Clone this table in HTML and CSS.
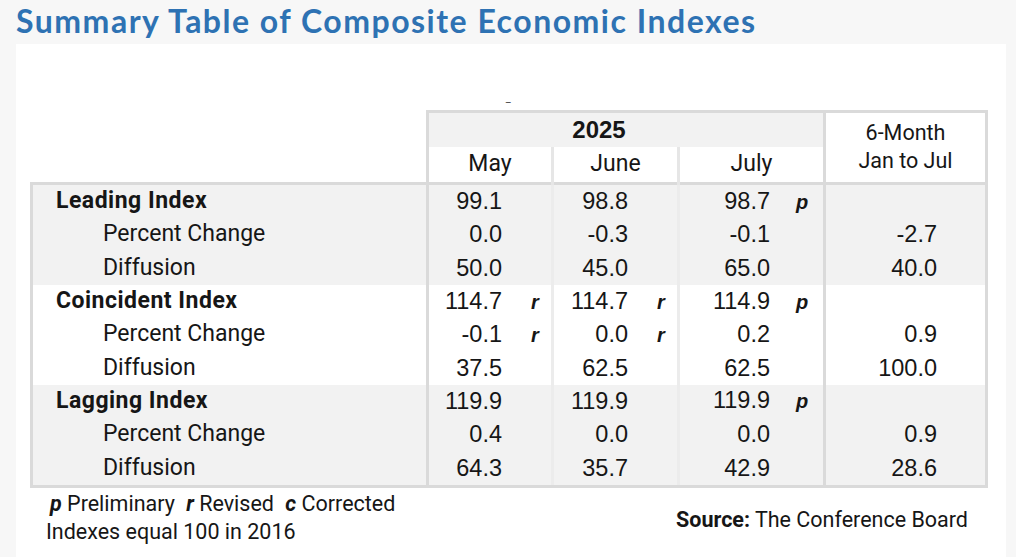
FILE: index.html
```html
<!DOCTYPE html>
<html lang="en">
<head>
<meta charset="utf-8">
<title>Summary Table of Composite Economic Indexes</title>
<link rel="stylesheet" href="styles.css">
</head>
<body>
<h1 class="title">Summary Table of Composite Economic Indexes</h1>
<div class="panel">
  <div class="dash">–</div>
  <table class="summary">
    <colgroup>
      <col class="c-label"><col class="c-may"><col class="c-june"><col class="c-july"><col class="c-six">
    </colgroup>
    <thead>
      <tr>
        <th class="blank" rowspan="2"></th>
        <th class="year" colspan="3">2025</th>
        <th class="six" rowspan="2">6-Month<br>Jan to Jul</th>
      </tr>
      <tr>
        <th class="month">May</th>
        <th class="month">June</th>
        <th class="month">July</th>
      </tr>
    </thead>
    <tbody class="grp shade">
      <tr><td class="lbl main">Leading Index</td><td class="v"><span class="n">99.1</span><span class="f"></span></td><td class="v"><span class="n">98.8</span><span class="f"></span></td><td class="v wide"><span class="n">98.7</span><span class="f">p</span></td><td class="s"></td></tr>
      <tr><td class="lbl sub">Percent Change</td><td class="v"><span class="n">0.0</span><span class="f"></span></td><td class="v"><span class="n">-0.3</span><span class="f"></span></td><td class="v wide"><span class="n">-0.1</span><span class="f"></span></td><td class="s">-2.7</td></tr>
      <tr><td class="lbl sub">Diffusion</td><td class="v"><span class="n">50.0</span><span class="f"></span></td><td class="v"><span class="n">45.0</span><span class="f"></span></td><td class="v wide"><span class="n">65.0</span><span class="f"></span></td><td class="s">40.0</td></tr>
    </tbody>
    <tbody class="grp">
      <tr><td class="lbl main">Coincident Index</td><td class="v"><span class="n">114.7</span><span class="f">r</span></td><td class="v"><span class="n">114.7</span><span class="f">r</span></td><td class="v wide"><span class="n">114.9</span><span class="f">p</span></td><td class="s"></td></tr>
      <tr><td class="lbl sub">Percent Change</td><td class="v"><span class="n">-0.1</span><span class="f">r</span></td><td class="v"><span class="n">0.0</span><span class="f">r</span></td><td class="v wide"><span class="n">0.2</span><span class="f"></span></td><td class="s">0.9</td></tr>
      <tr><td class="lbl sub">Diffusion</td><td class="v"><span class="n">37.5</span><span class="f"></span></td><td class="v"><span class="n">62.5</span><span class="f"></span></td><td class="v wide"><span class="n">62.5</span><span class="f"></span></td><td class="s">100.0</td></tr>
    </tbody>
    <tbody class="grp shade last">
      <tr><td class="lbl main">Lagging Index</td><td class="v"><span class="n">119.9</span><span class="f"></span></td><td class="v"><span class="n">119.9</span><span class="f"></span></td><td class="v wide"><span class="n">119.9</span><span class="f">p</span></td><td class="s"></td></tr>
      <tr><td class="lbl sub">Percent Change</td><td class="v"><span class="n">0.4</span><span class="f"></span></td><td class="v"><span class="n">0.0</span><span class="f"></span></td><td class="v wide"><span class="n">0.0</span><span class="f"></span></td><td class="s">0.9</td></tr>
      <tr><td class="lbl sub">Diffusion</td><td class="v"><span class="n">64.3</span><span class="f"></span></td><td class="v"><span class="n">35.7</span><span class="f"></span></td><td class="v wide"><span class="n">42.9</span><span class="f"></span></td><td class="s">28.6</td></tr>
    </tbody>
  </table>
  <div class="notes">
    <div class="legend">
      <div class="legend-line"><b class="k">p</b> Preliminary <b class="k">r</b> Revised <b class="k">c</b> Corrected</div>
      <div class="legend-line base">Indexes equal 100 in 2016</div>
    </div>
    <div class="source"><b>Source:</b> The Conference Board</div>
  </div>
</div>
</body>
</html>
```
FILE: styles.css
```css
html, body {
  margin: 0;
  padding: 0;
  background: #f7f7f7;
}
body {
  width: 1016px;
  height: 557px;
  overflow: hidden;
  font-family: Roboto, "Liberation Sans", Arial, sans-serif;
  color: #161616;
}
.title {
  margin: 0;
  padding: 2px 0 0 16px;
  height: 42px;
  box-sizing: border-box;
  font-family: Lato, "Open Sans", sans-serif;
  font-weight: 700;
  font-size: 32px;
  line-height: 38px;
  color: #2e72b3;
  letter-spacing: 1.5px;
  white-space: nowrap;
}
.panel {
  margin: 2px 10px 0 16px;
  background: #fff;
  height: 520px;
  padding-top: 52px;
  box-sizing: border-box;
}
.dash {
  height: 14px;
  margin-left: 489px;
  font-size: 10px;
  line-height: 14px;
  color: #444;
}
.summary {
  margin-left: 14px;
  border-collapse: collapse;
  table-layout: fixed;
  width: 955px;
  font-size: 23px;
}
.c-label { width: 396px; }
.c-may { width: 125px; }
.c-june { width: 126px; }
.c-july { width: 146px; }
.c-six { width: 162px; }

th { font-weight: 400; padding: 0; }
th.blank { border: none; background: #fff; }
th.year {
  background: #f2f2f2;
  font-family: "Liberation Sans", Arial, sans-serif;
  font-weight: 700;
  font-size: 24px;
  height: 32px;
  border-top: 3px solid #dadada;
  border-left: 3px solid #dadada;
  line-height: 34px;
  text-align: center;
  padding-right: 54px;
}
th.six {
  background: #fff;
  border-top: 3px solid #dadada;
  border-left: 3px solid #dadada;
  border-right: 3px solid #dadada;
  font-size: 21.5px;
  line-height: 28px;
  vertical-align: top;
  padding-top: 6px;
}
th.month {
  background: #fff;
  height: 35px;
  border-left: 3px solid #e6e6e6;
  line-height: 33px;
  vertical-align: top;
}
th.month:first-child { border-left: 3px solid #dadada; }

.grp td { height: 32.3px; padding: 0 0 1px; line-height: 26px; }
.grp.shade td { background: #f2f2f2; }
.grp:first-of-type tr:first-child td { border-top: 3px solid #dadada; }
.grp.last tr:last-child td { border-bottom: 3px solid #dadada; }

td.lbl { border-left: 3px solid #dadada; border-right: 3px solid #dadada; }
td.main { font-weight: 700; padding-left: 23px; letter-spacing: 0.5px; }
td.sub { padding-left: 70px; }

td.v { border-left: 3px solid #ececec; }
td.lbl + td.v { border-left: 3px solid #dadada; }
td.v > .n,
td.v > .f { display: inline-block; }
td.v {
  font-family: "Liberation Sans", Arial, sans-serif;
  font-size: 23.5px;
  text-align: right;
  white-space: nowrap;
}
td.v .n { text-align: right; }
td.v .f {
  width: 49px;
  text-align: left;
  padding-left: 29px;
  box-sizing: border-box;
  font-weight: 700;
  font-style: italic;
  font-size: 20px;
}
td.v.wide .f {
  width: 53px;
  padding-left: 26px;
}
td.s {
  font-family: "Liberation Sans", Arial, sans-serif;
  font-size: 23.5px;
  border-left: 3px solid #dadada;
  border-right: 3px solid #dadada;
  text-align: right;
  padding-right: 48px;
}

.notes {
  display: flex;
  justify-content: space-between;
  align-items: flex-start;
  padding: 2px 38px 0 30px;
  font-size: 21.5px;
}
.legend-line { line-height: 28px; }
.legend-line:first-child { padding-left: 4px; }
.k { font-style: italic; font-weight: 700; margin-left: 6px; }
.k:first-child { margin-left: 0; }
.source { padding-top: 16px; line-height: 28px; }
```
